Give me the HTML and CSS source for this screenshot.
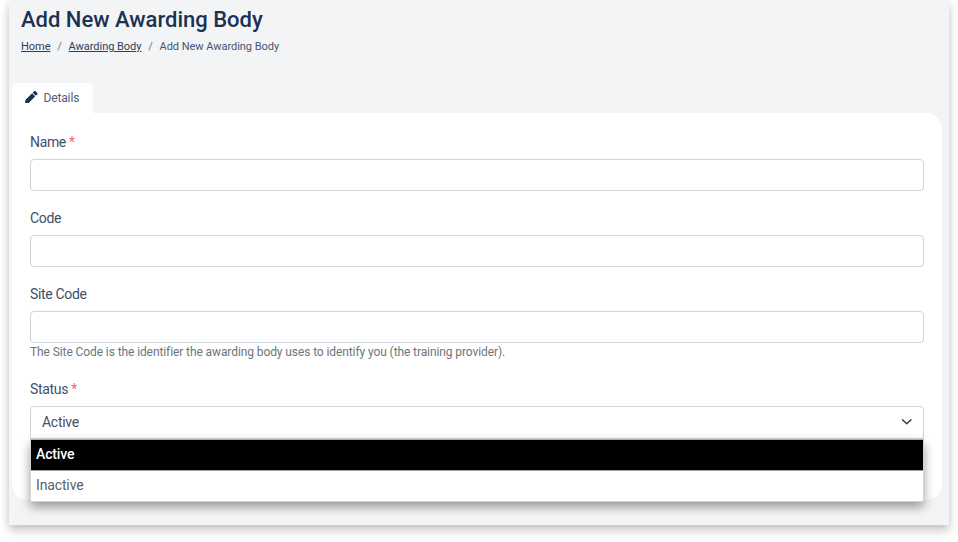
FILE: index.html
```html
<!DOCTYPE html>
<html lang="en">
<head>
<meta charset="utf-8">
<title>Add New Awarding Body</title>
<link rel="stylesheet" href="styles.css">
</head>
<body>
<main class="panel">
  <header class="page-head">
    <h1 class="title">Add New Awarding Body</h1>
    <nav class="crumbs">
      <a href="#">Home</a><span class="sep">/</span><a href="#">Awarding Body</a><span class="sep">/</span><span>Add New Awarding Body</span>
    </nav>
  </header>
  <div class="tabs">
    <div class="tab">
      <svg class="tab-icon" viewBox="0 0 512 512" aria-hidden="true"><path d="M497.9 142.1l-46.1 46.1c-4.7 4.7-12.3 4.7-17 0l-111-111c-4.7-4.7-4.7-12.3 0-17l46.1-46.1c18.7-18.7 49.1-18.7 67.9 0l60.1 60.1c18.8 18.7 18.8 49.1 0 67.9zM284.2 99.8L21.6 362.4.4 483.9c-2.9 16.4 11.4 30.6 27.8 27.8l121.5-21.3 262.6-262.6c4.7-4.7 4.7-12.3 0-17l-111-111c-4.8-4.7-12.4-4.7-17.1 0z"/></svg>
      <span>Details</span>
    </div>
  </div>
  <form class="card">
    <div class="field">
      <label class="label">Name <span class="req">*</span></label>
      <div class="input"></div>
    </div>
    <div class="field">
      <label class="label">Code</label>
      <div class="input"></div>
    </div>
    <div class="field field-hint">
      <label class="label">Site Code</label>
      <div class="input"></div>
      <p class="hint">The Site Code is the identifier the awarding body uses to identify you (the training provider).</p>
    </div>
    <div class="field field-select">
      <label class="label">Status <span class="req">*</span></label>
      <div class="select">
        <span>Active</span>
        <svg class="chevron" viewBox="0 0 16 16" aria-hidden="true"><path d="M3 5.5l5 5 5-5" fill="none" stroke="#343a40" stroke-width="1.7" stroke-linecap="round" stroke-linejoin="round"/></svg>
        <ul class="menu">
          <li class="option selected">Active</li>
          <li class="option">Inactive</li>
        </ul>
      </div>
    </div>
  </form>
</main>
</body>
</html>
```
FILE: styles.css
```css
* { box-sizing: border-box; }
html, body { margin: 0; padding: 0; height: 542px; overflow: hidden; background: #fff; }
body { font-family: Roboto, "Liberation Sans", sans-serif; color: #1e3553; }
.panel {
  margin: 0 9px 0 9px;
  height: 525px;
  padding: 0 7px 0 3px;
  background: #f3f4f6;
  box-shadow: 0 6px 9px rgba(0, 0, 0, .2), 0 0 7px rgba(0, 0, 0, .07);
  display: flex;
  flex-direction: column;
}
.page-head { padding: 7px 0 0 9px; height: 83px; }
.title { margin: 0; font-size: 22px; line-height: 26px; font-weight: 500; color: #1b3252; }
.crumbs { margin-top: 7px; font-size: 11px; letter-spacing: -.003em; line-height: 14px; color: #46566e; display: flex; }
.crumbs a { color: #2a3f5c; text-decoration: underline; }
.sep { margin: 0 6.8px; color: #6c757d; }
.tabs { display: flex; height: 30px; }
.tab {
  width: 81px;
  background: #fff;
  border-radius: 5px 5px 0 0;
  display: flex;
  align-items: center;
  gap: 6px;
  padding: 0 0 0 13px;
  font-size: 12px;
  letter-spacing: -.012em;
  color: #4f5f79;
}
.tab-icon { width: 12.5px; height: 12.5px; margin-bottom: 2px; fill: #1b3252; }
.card {
  height: 387px;
  background: #fff;
  border-radius: 0 16px 16px 16px;
  padding: 20px 18px 0;
}
.field { margin-bottom: 18px; }
.field-hint { margin-bottom: 0; }
.field-select { margin-top: 21px; }
.label { display: block; height: 26px; padding-top: 1px; font-size: 14px; letter-spacing: -.024em; line-height: 17px; color: #3f4f67; }
.req { color: #f4666c; }
.input {
  height: 32px;
  background: #fff;
  border: 1px solid #ced4da;
  border-radius: 4px;
}
.hint { margin: 3px 0 0; font-size: 12px; letter-spacing: -.008em; line-height: 13px; color: #6c757d; }
.select {
  position: relative;
  height: 33px;
  border: 1px solid #ced4da;
  border-radius: 4px 4px 0 0;
  padding: 0 11px 1px;
  display: flex;
  align-items: center;
  justify-content: space-between;
  font-size: 14px;
  letter-spacing: -.02em;
  color: #495057;
}
.chevron { width: 13.5px; height: 13.5px; margin-right: -1px; }
.menu {
  position: absolute;
  left: -1px;
  right: -1px;
  top: 32px;
  margin: 0;
  padding: 0;
  list-style: none;
  background: #fff;
  border: 1px solid #ced4da;
  border-top-color: #aab1b8;
  box-shadow: 0 5px 10px rgba(0, 0, 0, .38);
}
.option { height: 30px; padding: 0 5px; font-size: 14px; letter-spacing: -.01em; line-height: 28px; color: #5a6169; }
.option.selected { height: 31px; background: #000; border-bottom: 1px solid #9aa0a6; color: #fff; font-weight: 500; }
```
